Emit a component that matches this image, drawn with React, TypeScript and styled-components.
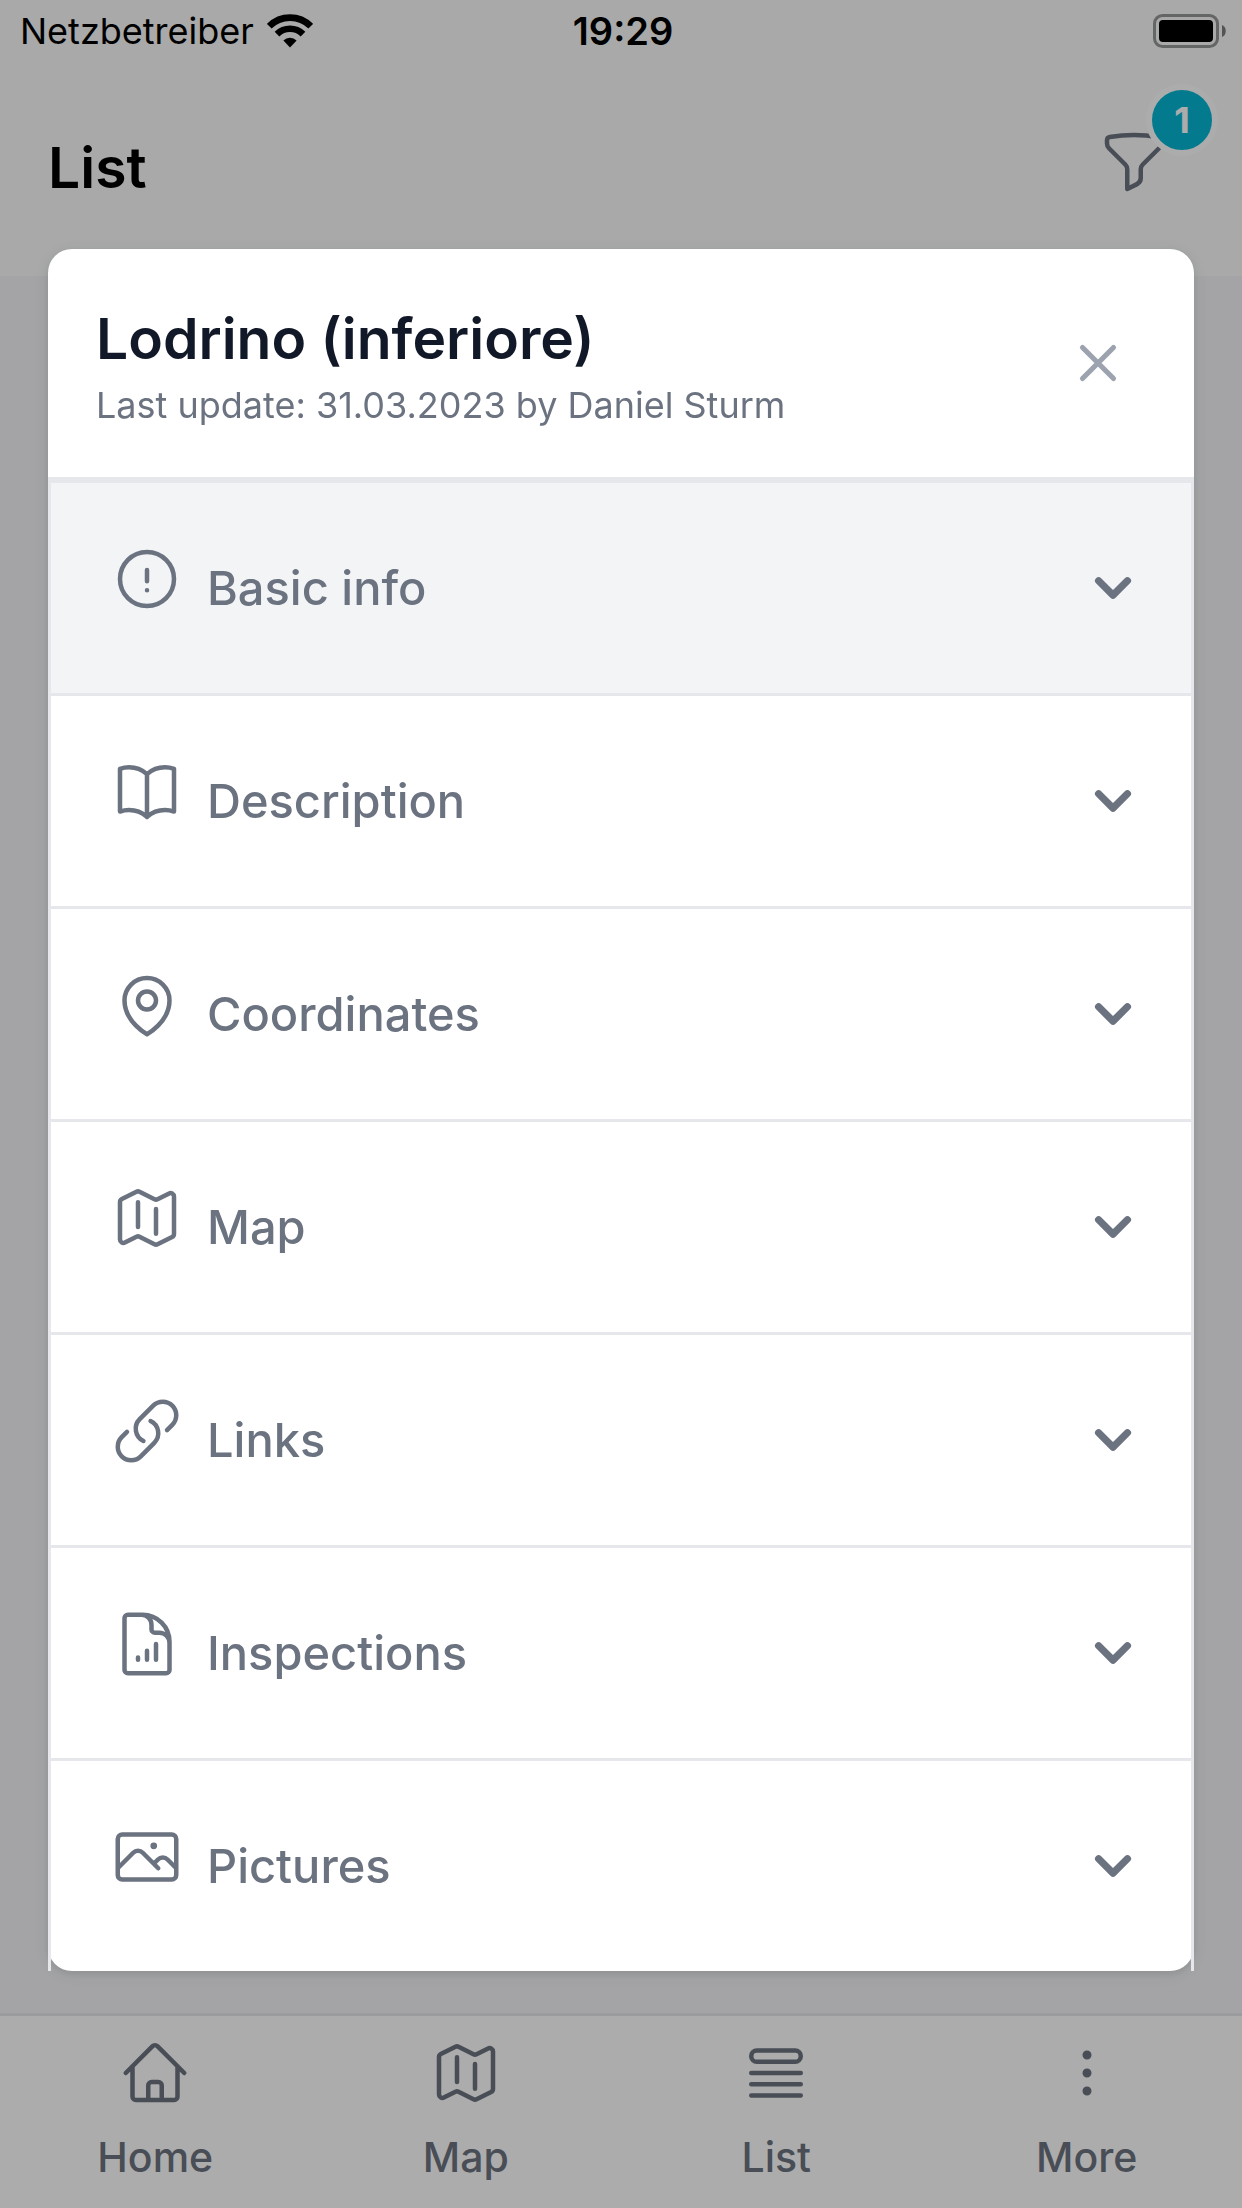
import React from "react";
import styled, { createGlobalStyle } from "styled-components";
import type { IconType } from "react-icons";
import { HiChevronDown, HiOutlineX } from "react-icons/hi";
import {
  HiOutlineBookOpen,
  HiOutlineDocumentChartBar,
  HiOutlineEllipsisVertical,
  HiOutlineExclamationCircle,
  HiOutlineFunnel,
  HiOutlineHome,
  HiOutlineLink,
  HiOutlineMap,
  HiOutlineMapPin,
  HiOutlinePhoto,
  HiOutlineQueueList,
} from "react-icons/hi2";

const color = {
  line: "#e5e7eb",
  muted: "#6b7280",
  faint: "#9ca3af",
  ink: "#111827",
  canvas: "#f3f4f6",
};

const GlobalStyle = createGlobalStyle`
  *, *::before, *::after { box-sizing: border-box; }
  body { margin: 0; background: ${color.canvas}; }
  body, button { font-family: Inter, "Liberation Sans", sans-serif; }
  h1, h2, h3, p { margin: 0; }
  button { border: 0; margin: 0; padding: 0; background: none; color: inherit; cursor: pointer; }
  svg { display: block; flex: none; }
`;

const Page = styled.div`
  display: flex;
  flex-direction: column;
  min-height: 100vh;
`;

const TopArea = styled.header`
  background: #f9fbfa;
`;

const StatusBar = styled.div`
  display: grid;
  grid-template-columns: 1fr auto 1fr;
  align-items: center;
  height: 60px;
  padding: 2px 16px 0 20px;
  font-size: 36px;
  line-height: 42px;
  color: #000;
`;

const Carrier = styled.span`
  display: flex;
  align-items: center;
  gap: 13px;
`;

const Time = styled.time`
  font-size: 38px;
  font-weight: 600;
`;

const BatteryIcon = styled.svg`
  justify-self: end;
`;

const TitleBar = styled.div`
  display: flex;
  align-items: center;
  justify-content: space-between;
  height: 216px;
  padding: 0 72px 0 48px;
`;

const PageTitle = styled.h1`
  font-size: 57px;
  line-height: 84px;
  font-weight: 600;
  color: #000;
`;

const FilterButton = styled.button`
  position: relative;
  padding-bottom: 12px;
  color: ${color.muted};
`;

const Badge = styled.span`
  position: absolute;
  top: -42px;
  right: -48px;
  display: flex;
  align-items: center;
  justify-content: center;
  width: 72px;
  height: 72px;
  border: 6px solid #fff;
  border-radius: 50%;
  background: #06b6d4;
  color: #fff;
  font-size: 36px;
  font-weight: 700;
`;

const Content = styled.main`
  flex: 1;
`;

const NavBar = styled.nav`
  display: grid;
  grid-template-columns: repeat(4, 1fr);
  padding: 21px 0;
  border-top: 3px solid ${color.line};
  background: #fff;
`;

const NavLink = styled.a`
  display: flex;
  flex-direction: column;
  align-items: center;
  gap: 18px;
  color: ${color.muted};
  font-size: 41px;
  line-height: 60px;
  font-weight: 500;
  text-decoration: none;
`;

const Backdrop = styled.div`
  position: fixed;
  inset: 0;
  padding: 249px 48px 0;
  overflow: auto;
  background: rgba(0, 0, 0, 0.325);
`;

const Dialog = styled.section`
  border-radius: 24px;
  background: #fff;
  box-shadow: 0 3px 9px rgba(0, 0, 0, 0.1), 0 3px 24px rgba(0, 0, 0, 0.06);
`;

const DialogHeader = styled.div`
  display: flex;
  align-items: center;
  justify-content: space-between;
  padding: 48px;
  border-bottom: 3px solid ${color.line};
`;

const DialogTitle = styled.h2`
  font-size: 57px;
  line-height: 84px;
  font-weight: 600;
  color: ${color.ink};
`;

const Subtitle = styled.p`
  font-size: 36px;
  line-height: 48px;
  color: ${color.muted};
`;

const CloseButton = styled.button`
  padding: 17px;
  color: ${color.faint};
`;

const Accordion = styled.div`
  border: 3px solid ${color.line};
  border-bottom: 0;
`;

const AccordionHeading = styled.h3<{ $active?: boolean }>`
  background: ${({ $active }) => ($active ? color.canvas : "transparent")};

  & + & {
    border-top: 3px solid ${color.line};
  }
`;

const AccordionButton = styled.button`
  display: flex;
  align-items: center;
  gap: 24px;
  width: 100%;
  padding: 60px 42px 60px 60px;
  color: ${color.muted};
  font-size: 47px;
  line-height: 90px;
  font-weight: 500;
  text-align: left;

  & > svg:first-child {
    align-self: flex-start;
  }
`;

const Label = styled.span`
  flex: 1;
`;

const sections: { label: string; icon: IconType }[] = [
  { label: "Basic info", icon: HiOutlineExclamationCircle },
  { label: "Description", icon: HiOutlineBookOpen },
  { label: "Coordinates", icon: HiOutlineMapPin },
  { label: "Map", icon: HiOutlineMap },
  { label: "Links", icon: HiOutlineLink },
  { label: "Inspections", icon: HiOutlineDocumentChartBar },
  { label: "Pictures", icon: HiOutlinePhoto },
];

const tabs: { label: string; icon: IconType }[] = [
  { label: "Home", icon: HiOutlineHome },
  { label: "Map", icon: HiOutlineMap },
  { label: "List", icon: HiOutlineQueueList },
  { label: "More", icon: HiOutlineEllipsisVertical },
];

function Wifi() {
  return (
    <svg width="46" height="34" viewBox="0 0 46 34" aria-label="Wi-Fi">
      <g fill="none" stroke="#000" strokeWidth="6.6">
        <path d="M2.3 12.2a29.3 29.3 0 0 1 41.4 0" />
        <path d="M10 20.2a18.4 18.4 0 0 1 26 0" />
      </g>
      <path d="M23 33.5l-6.6-7a9.4 9.4 0 0 1 13.2 0z" />
    </svg>
  );
}

function Battery() {
  return (
    <BatteryIcon width="73" height="34" viewBox="0 0 73 34" aria-label="Battery full">
      <rect x="1.5" y="1.5" width="63" height="31" rx="8" fill="none" stroke="#000" strokeOpacity="0.4" strokeWidth="3" />
      <rect x="6" y="6" width="54" height="22" rx="4" />
      <path d="M69 11c5 1.5 5 10.5 0 12z" fillOpacity="0.5" />
    </BatteryIcon>
  );
}

export default function App() {
  return (
    <>
      <GlobalStyle />
      <Page>
        <TopArea>
          <StatusBar>
            <Carrier>
              Netzbetreiber
              <Wifi />
            </Carrier>
            <Time>19:29</Time>
            <Battery />
          </StatusBar>
          <TitleBar>
            <PageTitle>List</PageTitle>
            <FilterButton type="button" aria-label="Filter, 1 active">
              <HiOutlineFunnel size={72} />
              <Badge>1</Badge>
            </FilterButton>
          </TitleBar>
        </TopArea>
        <Content />
        <NavBar>
          {tabs.map(({ label, icon: Icon }) => (
            <NavLink key={label} href={`#${label.toLowerCase()}`}>
              <Icon size={72} />
              {label}
            </NavLink>
          ))}
        </NavBar>
      </Page>
      <Backdrop>
        <Dialog role="dialog" aria-modal="true" aria-labelledby="site-title">
          <DialogHeader>
            <div>
              <DialogTitle id="site-title">Lodrino (inferiore)</DialogTitle>
              <Subtitle>Last update: 31.03.2023 by Daniel Sturm</Subtitle>
            </div>
            <CloseButton type="button" aria-label="Close">
              <HiOutlineX size={62} />
            </CloseButton>
          </DialogHeader>
          <Accordion>
            {sections.map(({ label, icon: Icon }, index) => (
              <AccordionHeading key={label} $active={index === 0}>
                <AccordionButton type="button" aria-expanded={false}>
                  <Icon size={72} />
                  <Label>{label}</Label>
                  <HiChevronDown size={72} />
                </AccordionButton>
              </AccordionHeading>
            ))}
          </Accordion>
        </Dialog>
      </Backdrop>
    </>
  );
}
